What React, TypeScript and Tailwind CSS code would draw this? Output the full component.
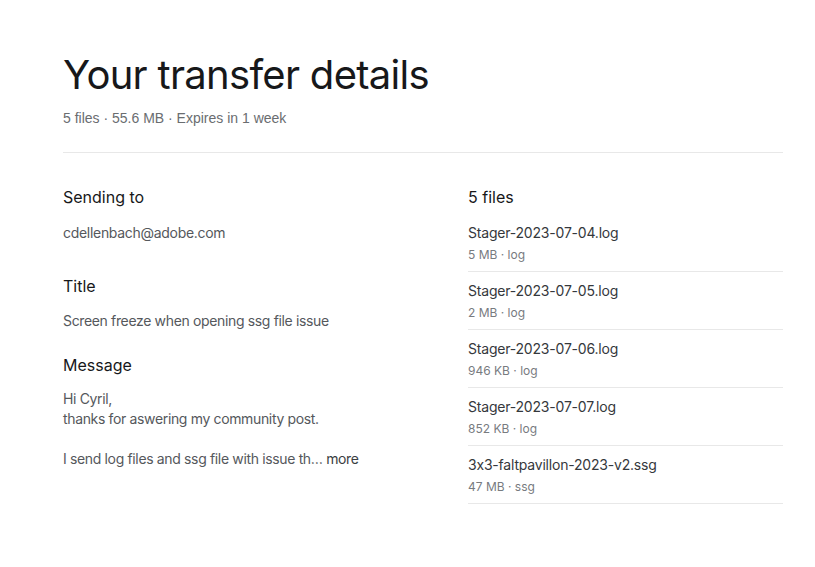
import React from 'react';

const files = [
  { name: 'Stager-2023-07-04.log', size: '5 MB', ext: 'log' },
  { name: 'Stager-2023-07-05.log', size: '2 MB', ext: 'log' },
  { name: 'Stager-2023-07-06.log', size: '946 KB', ext: 'log' },
  { name: 'Stager-2023-07-07.log', size: '852 KB', ext: 'log' },
  { name: '3x3-faltpavillon-2023-v2.ssg', size: '47 MB', ext: 'ssg' },
];

export default function App() {
  return (
    <div className="min-h-screen bg-white font-['Inter',sans-serif] [font-feature-settings:'calt'_0] text-[#17181a]">
      <main className="w-[720px] ml-[63px] pt-[52px]">
        {/* Header */}
        <h1 className="text-[40px] leading-[46px] font-normal tracking-[-0.7px] text-[#17181a]">
          Your transfer details
        </h1>
        <p className="mt-[10px] text-[14px] leading-[20px] text-[#6a6d70] font-['Liberation_Sans',sans-serif]">
          5 files · 55.6 MB · Expires in 1 week
        </p>
        <div className="mt-[24px] h-px bg-[#e8e8e8]" />

        <div className="grid grid-cols-[405px_315px] pt-[33px]">
          {/* Left column */}
          <div>
            <section>
              <h2 className="text-[16px] leading-[22px] text-[#17181a]">Sending to</h2>
              <p className="mt-[15px] text-[14px] leading-[20px] tracking-[-0.3px] text-[#55585c]">cdellenbach@adobe.com</p>
            </section>
            <section className="mt-[32px]">
              <h2 className="text-[16px] leading-[22px] text-[#17181a]">Title</h2>
              <p className="mt-[14px] text-[14px] leading-[20px] tracking-[-0.35px] text-[#55585c]">
                Screen freeze when opening ssg file issue
              </p>
            </section>
            <section className="mt-[23px]">
              <h2 className="text-[16px] leading-[22px] text-[#17181a]">Message</h2>
              <p className="mt-[13px] text-[14px] leading-[20px] tracking-[-0.35px] text-[#55585c]">
                Hi Cyril,
                <br />
                thanks for aswering my community post.
                <br />
                <br />
                I send log files and ssg file with issue th…{' '}
                <span className="text-[#3b3e42] cursor-pointer">more</span>
              </p>
            </section>
          </div>

          {/* Right column */}
          <div>
            <h2 className="text-[16px] leading-[22px] text-[#17181a]">5 files</h2>
            <ul className="mt-[15px]">
              {files.map((f) => (
                <li key={f.name} className="border-b border-[#e8e8e8] pb-[7px] mb-[9px]">
                  <div className="text-[14px] leading-[20px] tracking-[-0.2px] text-[#35383c]">{f.name}</div>
                  <div className="mt-[3px] text-[12px] leading-[18px] text-[#787b7f]">
                    {f.size} · {f.ext}
                  </div>
                </li>
              ))}
            </ul>
          </div>
        </div>
      </main>
    </div>
  );
}
